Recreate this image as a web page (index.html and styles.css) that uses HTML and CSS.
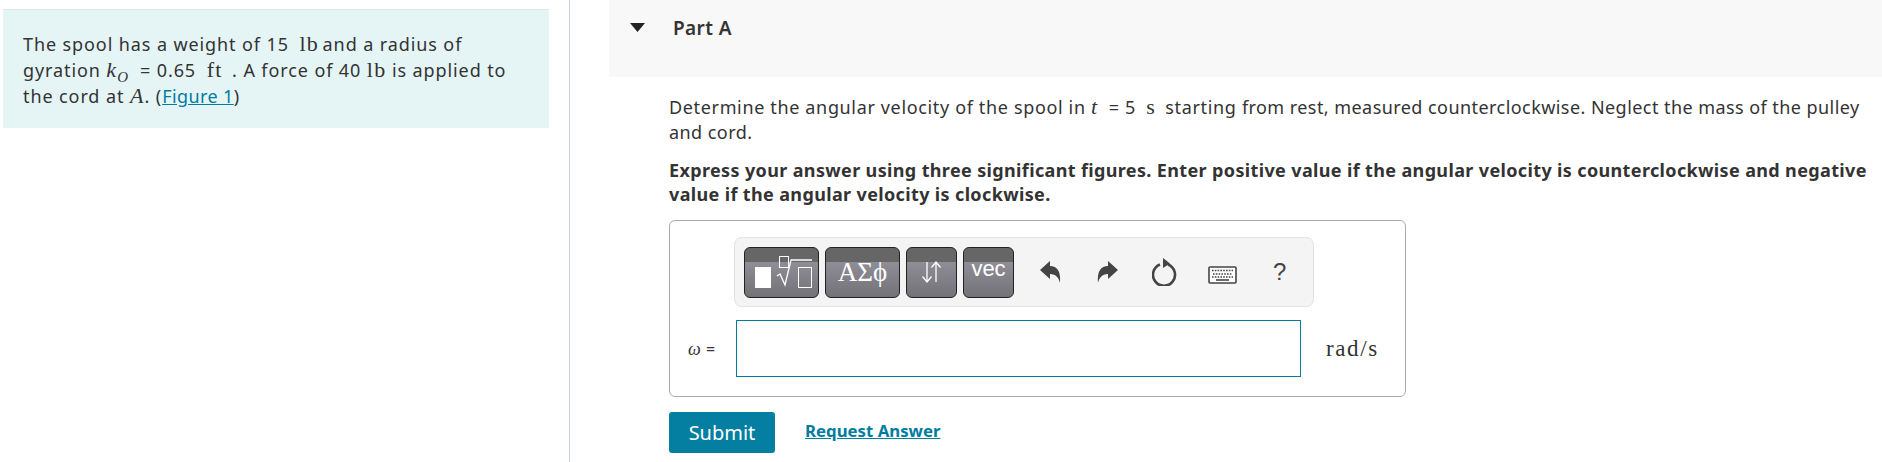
FILE: index.html
```html
<!DOCTYPE html>
<html lang="en">
<head>
<meta charset="utf-8">
<title>Part A</title>
<link rel="stylesheet" href="styles.css">
</head>
<body>
<div class="page">
  <aside class="side">
    <div class="intro">
      The spool has a weight of 15 <span class="m gap">lb</span> and a radius of<br>
      gyration <span class="m i">k<sub>O</sub></span> <span class="eq">= 0.65</span> <span class="m gap-wide">ft</span> . A force of 40 <span class="m">lb</span> is applied to<br>
      the cord at <span class="m i">A</span>. (<a href="#">Figure 1</a>)
    </div>
  </aside>
  <main class="main">
    <header class="part-head">
      <svg class="caret" width="15" height="9" viewBox="0 0 15 9"><path d="M0 0H15L7.500 9Z" fill="#222"/></svg>
      <h2>Part A</h2>
    </header>
    <section class="part-body">
      <p class="q">Determine the angular velocity of the spool in <span class="m i">t</span> <span class="eq">= 5</span> <span class="m gap-wide">s</span> starting <span class="tail">from rest, measured counterclockwise. Neglect the mass of the pulley and cord.</span></p>
      <p class="q strong">Express your answer using three significant figures. Enter positive value if the angular velocity is counterclockwise and negative value if the angular velocity is clockwise.</p>
      <div class="answer">
        <div class="toolbar">
          <div class="tools">
            <span class="btn b1">
              <svg width="73" height="49" viewBox="0 0 73 49" fill="none" stroke="#fff">
                <rect x="10" y="19" width="16" height="21" fill="#fff" stroke="none"/>
                <rect x="34.500" y="8.500" width="9" height="11" stroke-width="1"/>
                <path d="M32 28l3-2 5 11 6-25h21" stroke-width="1.300"/>
                <rect x="53.500" y="19.500" width="13" height="20" stroke-width="1"/>
              </svg>
            </span>
            <span class="btn b2">ΑΣϕ</span>
            <span class="btn b3">
              <svg width="24" height="24" viewBox="0 0 24 24" fill="none" stroke="#fff" stroke-width="1.300"><path d="M7 2v20M2.500 16.500L7 22l4.500-5.500M16 22V2M11.500 7.500L16 2l4.500 5.500"/></svg>
            </span>
            <span class="btn b4">vec</span>
          </div>
          <div class="actions">
            <svg width="22" height="24" viewBox="0 0 22 24"><path d="M0 10L10 1v5c7 0 11 5 10 17-1-5-4-9-10-9v5Z" fill="#444"/></svg>
            <svg width="22" height="24" viewBox="0 0 22 24"><path d="M22 10L12 1v5C5 6 1 11 2 23c1-5 4-9 10-9v5Z" fill="#444"/></svg>
            <svg width="26" height="28" viewBox="0 0 26 28" fill="none"><path d="M8 6.500a11 11 0 1 0 8 0" stroke="#444" stroke-width="2.600"/><path d="M11 0l7 5.500-7 4.500Z" fill="#444"/></svg>
            <svg class="kbd" width="29" height="19" viewBox="0 0 29 19"><rect x="1" y="1" width="27" height="16" rx="1" fill="#fff" stroke="#444" stroke-width="1.600"/><path d="M4 4.500h21M5 8h19M4 11h21" stroke="#444" stroke-width="1.600" stroke-dasharray="1.600 1.200"/><path d="M8 14h13" stroke="#444" stroke-width="1.600"/></svg>
            <span class="help">?</span>
          </div>
        </div>
        <div class="entry">
          <span class="var"><span class="m i">ω</span> =</span>
          <div class="field"></div>
          <span class="unit">rad/s</span>
        </div>
      </div>
      <div class="submit-row">
        <button class="submit" type="button">Submit</button>
        <a class="req" href="#">Request Answer</a>
      </div>
    </section>
  </main>
</div>
</body>
</html>
```

FILE: styles.css
```css
* { box-sizing: border-box; }
html, body { margin: 0; padding: 0; background: #fff; }
body { font-family: "Noto Sans", "Open Sans", sans-serif; color: #333; font-size: 18px; overflow: hidden; }
.page { display: flex; height: 462px; width: 1882px; }
.side { width: 570px; flex: none; padding: 9px 0 0 3px; border-right: 1px solid #c5d1e3; }
.intro { width: 546px; height: 119px; background: #e5f5f6; border-top: 1px solid #dde6e8; padding: 21px 20px 0 20px; line-height: 26px; font-size: 18px; letter-spacing: 0.9px; }
.intro a { color: #007c9f; text-decoration: underline; letter-spacing: 0.4px; }
.m { font-family: "Liberation Serif", serif; font-size: 22px; letter-spacing: 1.2px; line-height: 0; }
.i { font-style: italic; }
.gap { margin: 0 -2px 0 5px; }
.gap-wide { margin: 0 4px 0 5px; }
.eq { margin-left: 5px; }
.tail { letter-spacing: 0.44px; }
sub { font-size: 15px; line-height: 0; }
.main { margin-left: 39px; flex: 1; min-width: 0; }
.part-head { height: 77px; background: #f8f8f8; display: flex; align-items: flex-start; padding: 15px 0 0 21px; gap: 28px; }
.caret { margin-top: 8px; }
h2 { margin: 0; font-size: 19px; font-weight: 600; line-height: 26px; color: #333; letter-spacing: 0.4px; }
.part-body { padding: 18px 0 0 60px; }
.q { margin: 0; line-height: 25px; width: 1205px; letter-spacing: 0.65px; }
.strong { font-weight: 700; margin-top: 13px; line-height: 24px; letter-spacing: 0.36px; }
.answer { width: 737px; height: 177px; margin-top: 14px; border: 1px solid #aaa; border-radius: 6px; padding: 16px 0 0 64px; }
.toolbar { width: 580px; height: 70px; background: #f4f4f4; border: 1px solid #e2e2e2; border-radius: 8px; display: flex; align-items: center; padding: 0 9px; }
.tools { display: flex; gap: 6px; }
.btn { height: 51px; border: 1px solid #222; border-radius: 6px; background: linear-gradient(#666 0 14px, #8f8e97 14px, #737277); color: #fff; display: flex; align-items: center; justify-content: center; }
.b1 { width: 75px; }
.b2 { width: 75px; font-family: "Liberation Serif", serif; font-size: 27px; }
.b3, .b4 { width: 51px; }
.b4 { font-family: "Liberation Sans", sans-serif; font-size: 22px; padding-bottom: 6px; }
.actions { display: flex; align-items: center; margin-left: 26px; gap: 34px; }
.kbd { margin: 6px 0 0 -4px; }
.help { font-family: "Liberation Sans", sans-serif; font-size: 24px; color: #444; margin-left: 2px; }
.entry { display: flex; align-items: center; margin: 13px 0 0 -64px; padding-left: 18px; }
.var { width: 48px; font-size: 16px; flex: none; }
.var .m { font-size: 18px; }
.field { width: 565px; height: 57px; border: 1px solid #007c9f; background: #fff; flex: none; }
.unit { font-family: "Liberation Serif", serif; font-size: 23px; margin-left: 25px; letter-spacing: 1.6px; }
.submit-row { display: flex; align-items: flex-start; margin-top: 15px; gap: 30px; }
.submit { width: 106px; height: 41px; padding: 0; background: #047ea1; color: #fff; border: 0; border-radius: 3px; font: inherit; font-size: 20px; letter-spacing: 0; }
.req { color: #007c9f; font-weight: 700; font-size: 16.8px; margin-top: 7px; }
```
